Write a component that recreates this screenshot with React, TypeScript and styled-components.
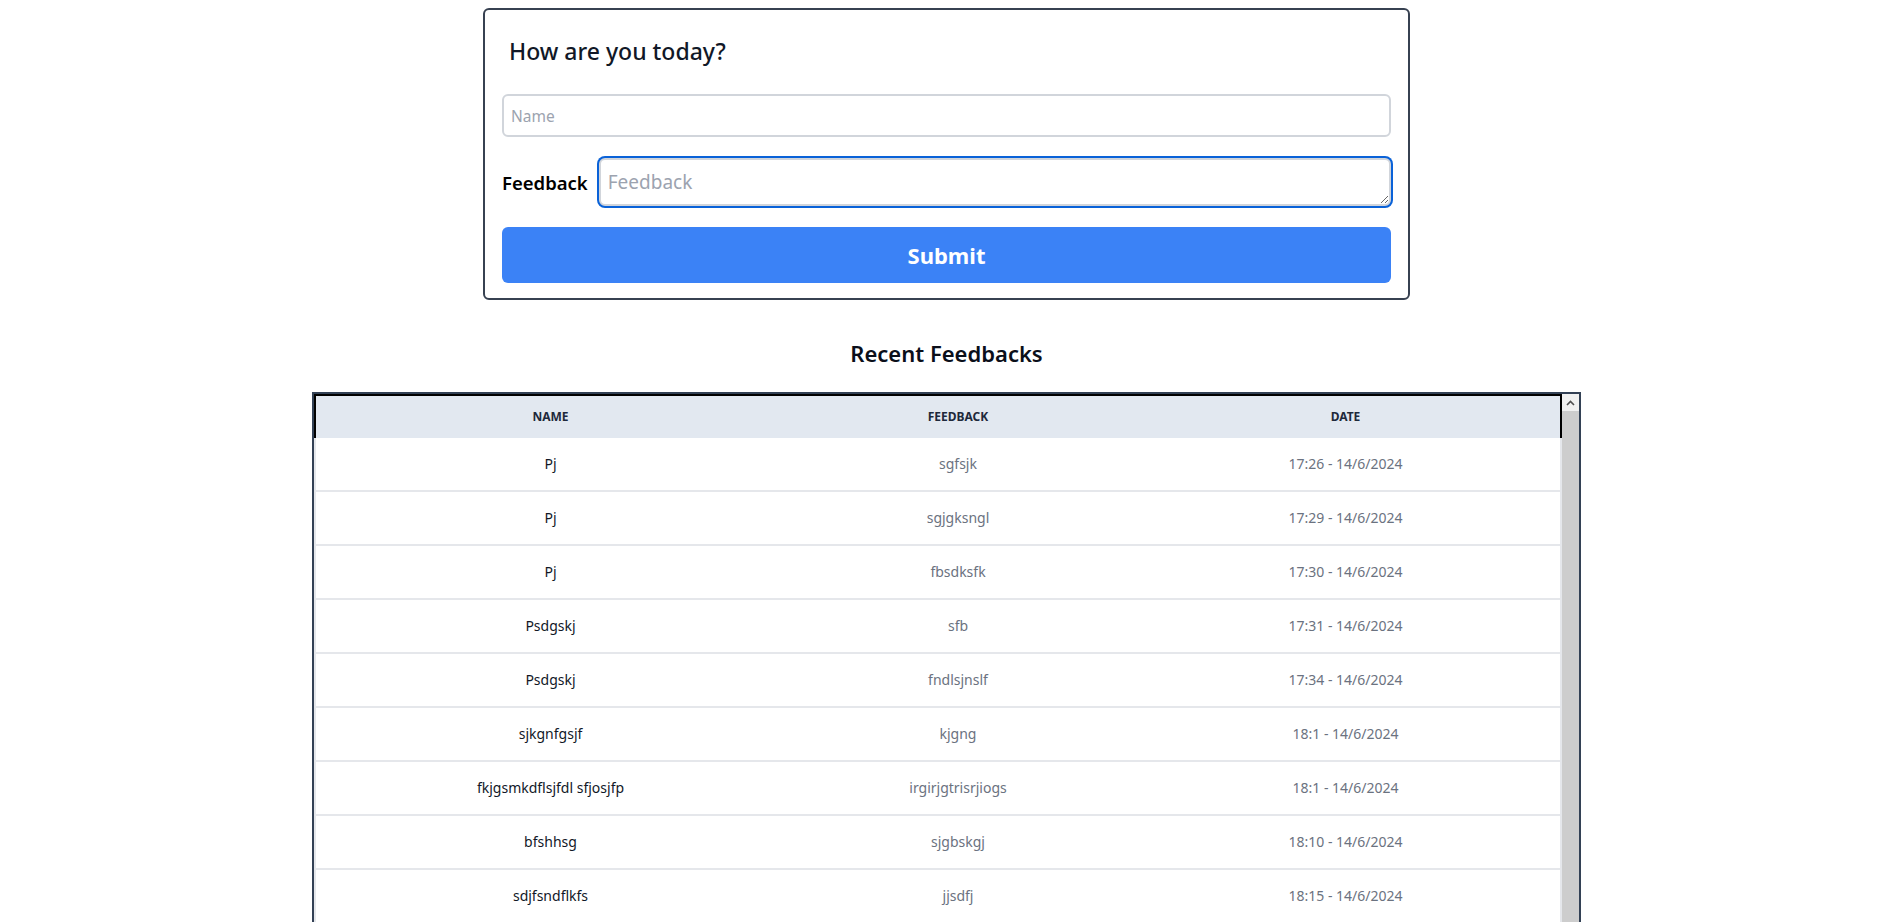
import React from "react";
import styled, { createGlobalStyle } from "styled-components";

const Global = createGlobalStyle`
  html, body { margin: 0; padding: 0; overflow: hidden; background: #ffffff; }
  body { font-family: "Noto Sans", "Open Sans", sans-serif; color: #111827; }
  * { box-sizing: border-box; }
`;

const Page = styled.div`
  display: flex;
  flex-direction: column;
  align-items: center;
  padding: 8px 6px 0 0;
`;

const Card = styled.form`
  width: 927px;
  border: 2px solid #374151;
  border-radius: 6px;
  padding: 25px 17px 15px;
  display: flex;
  flex-direction: column;
`;

const Title = styled.h1`
  margin: 0 0 27px;
  padding: 0 7px;
  font-size: 23px;
  line-height: 32px;
  font-weight: 500;
  color: #111827;
`;

const NameInput = styled.input`
  height: 43px;
  width: 100%;
  border: 2px solid #d1d5db;
  border-radius: 6px;
  padding: 0 7px;
  font-family: inherit;
  font-size: 15.5px;
  color: #111827;
  outline: none;
  &::placeholder { color: #9ca3af; }
`;

const FeedbackRow = styled.div`
  display: flex;
  align-items: center;
  gap: 11px;
  margin-top: 21px;
`;

const Label = styled.label`
  font-size: 18.5px;
  font-weight: 600;
  color: #000000;
  white-space: nowrap;
`;

const FeedbackArea = styled.textarea`
  flex: 1;
  height: 48px;
  border: 2px solid #d1d5db;
  border-radius: 6px;
  padding: 9px 7px 7px;
  font-family: inherit;
  font-size: 19px;
  line-height: 27px;
  color: #111827;
  outline: none;
  box-shadow: 0 0 0 2px #0a62d8;
  resize: vertical;
  &::placeholder { color: #9ca3af; }
`;

const SubmitButton = styled.button`
  margin-top: 21px;
  height: 56px;
  width: 100%;
  border: none;
  border-radius: 6px;
  background: #3b82f6;
  color: #ffffff;
  font-family: inherit;
  font-size: 22px;
  font-weight: 700;
  cursor: pointer;
`;

const SectionTitle = styled.h2`
  margin: 37px 0 23px;
  font-size: 22px;
  line-height: 32px;
  font-weight: 600;
  color: #0b0f1a;
`;

const TableBox = styled.div`
  width: 1269px;
  height: 580px;
  border: 2px solid #334155;
  display: flex;
  overflow: hidden;
`;

const Viewport = styled.div`
  flex: 1;
  min-width: 0;
  overflow: hidden;
`;

const ScrollTrack = styled.div`
  width: 17px;
  flex: none;
  background: #f1f1f1;
  display: flex;
  flex-direction: column;
`;

const ScrollButton = styled.div`
  height: 17px;
  flex: none;
  display: flex;
  align-items: center;
  justify-content: center;
  background: #f1f1f1;
`;

const ScrollThumb = styled.div`
  height: 540px;
  flex: none;
  background: #cdcdcd;
`;

const Table = styled.table`
  width: 100%;
  border-collapse: collapse;
  table-layout: fixed;
`;

const HeadRow = styled.tr`
  background: #e2e8f0;
  border: 2px solid #000000;
  border-bottom: none;
`;

const HeadCell = styled.th<{ $w?: number }>`
  ${(p) => (p.$w ? `width: ${p.$w}px;` : "")}
  padding: 13px 8px 13px;
  font-size: 12px;
  line-height: 16px;
  font-weight: 700;
  text-transform: uppercase;
  color: #1e293b;
  text-align: center;
`;

const BodyRow = styled.tr`
  border: 2px solid #e5e7eb;
  border-top: none;
`;

const Cell = styled.td<{ $muted?: boolean }>`
  padding: 16px 8px;
  font-size: 14px;
  line-height: 20px;
  text-align: center;
  color: ${(p) => (p.$muted ? "#6b7280" : "#111827")};
`;

const rows = [
  { name: "Pj", feedback: "sgfsjk", date: "17:26 - 14/6/2024" },
  { name: "Pj", feedback: "sgjgksngl", date: "17:29 - 14/6/2024" },
  { name: "Pj", feedback: "fbsdksfk", date: "17:30 - 14/6/2024" },
  { name: "Psdgskj", feedback: "sfb", date: "17:31 - 14/6/2024" },
  { name: "Psdgskj", feedback: "fndlsjnslf", date: "17:34 - 14/6/2024" },
  { name: "sjkgnfgsjf", feedback: "kjgng", date: "18:1 - 14/6/2024" },
  { name: "fkjgsmkdflsjfdl sfjosjfp", feedback: "irgirjgtrisrjiogs", date: "18:1 - 14/6/2024" },
  { name: "bfshhsg", feedback: "sjgbskgj", date: "18:10 - 14/6/2024" },
  { name: "sdjfsndflkfs", feedback: "jjsdfj", date: "18:15 - 14/6/2024" },
];

function ChevronUp() {
  return (
    <svg width="9" height="6" viewBox="0 0 9 6">
      <path d="M1 5 L4.5 1.5 L8 5" fill="none" stroke="#505050" strokeWidth="1.6" />
    </svg>
  );
}

export default function App() {
  return (
    <>
      <Global />
      <Page>
        <Card onSubmit={(e) => e.preventDefault()}>
          <Title>How are you today?</Title>
          <NameInput placeholder="Name" />
          <FeedbackRow>
            <Label htmlFor="fb">Feedback</Label>
            <FeedbackArea id="fb" placeholder="Feedback" rows={1} />
          </FeedbackRow>
          <SubmitButton type="submit">Submit</SubmitButton>
        </Card>
        <SectionTitle>Recent Feedbacks</SectionTitle>
        <TableBox>
          <Viewport>
            <Table>
              <thead>
                <HeadRow>
                  <HeadCell $w={470}>Name</HeadCell>
                  <HeadCell $w={346}>Feedback</HeadCell>
                  <HeadCell>Date</HeadCell>
                </HeadRow>
              </thead>
              <tbody>
                {rows.map((r, i) => (
                  <BodyRow key={i}>
                    <Cell>{r.name}</Cell>
                    <Cell $muted>{r.feedback}</Cell>
                    <Cell $muted>{r.date}</Cell>
                  </BodyRow>
                ))}
              </tbody>
            </Table>
          </Viewport>
          <ScrollTrack>
            <ScrollButton>
              <ChevronUp />
            </ScrollButton>
            <ScrollThumb />
          </ScrollTrack>
        </TableBox>
      </Page>
    </>
  );
}
